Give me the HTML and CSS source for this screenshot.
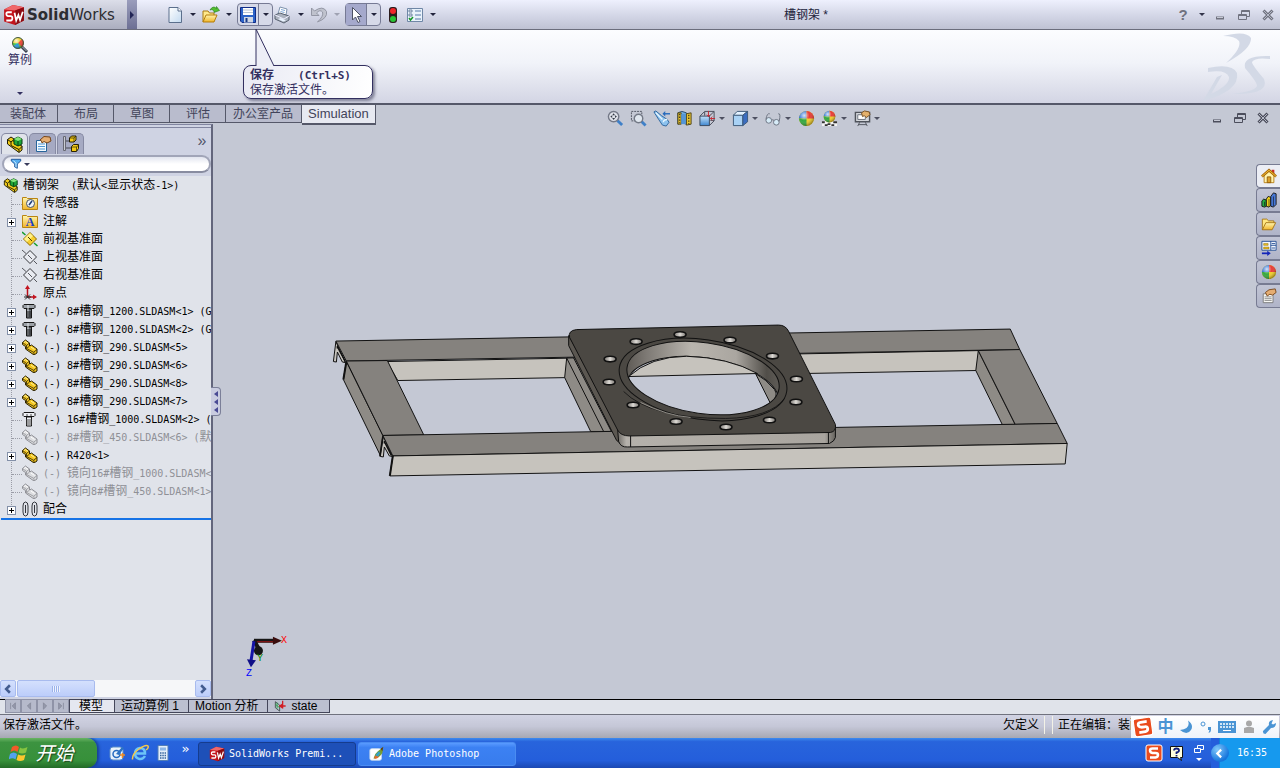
FILE: index.html
```html
<!DOCTYPE html>
<html lang="zh-CN">
  <head>
    <meta charset="UTF-8" />
    <meta name="viewport" content="width=device-width, initial-scale=1.0" />
    <title>槽钢架 *</title>
    <link rel="stylesheet" href="styles.css">
  </head>
  <body>
    <!-- icon sprite -->
    <svg class="sprite" aria-hidden="true">
      <defs>
        <linearGradient id="paper" x1="0" y1="0" x2="1" y2="1"><stop offset="0" stop-color="#fff" /><stop offset="1" stop-color="#c3daf0" /></linearGradient>
        <linearGradient id="glass" x1="0" y1="0" x2="0" y2="1"><stop offset="0" stop-color="#c4e3fb" /><stop offset="1" stop-color="#3e86cf" /></linearGradient>
        <linearGradient id="gold" x1="0" y1="0" x2="0" y2="1"><stop offset="0" stop-color="#fff6b0" /><stop offset="1" stop-color="#f0b429" /></linearGradient>
        <radialGradient id="shine" cx=".35" cy=".3" r=".7"><stop offset="0" stop-color="#fff" stop-opacity=".8" /><stop offset=".5" stop-color="#fff" stop-opacity="0" /><stop offset="1" stop-color="#000" stop-opacity=".35" /></radialGradient>
      </defs>
      <symbol id="i-sw" viewBox="0 0 20 20">
        <path d="M1 5l8-4 10 2v12l-8 4-10-3z" fill="#c3141c" />
        <path d="M1 5l8-4 10 2-8 3z" fill="#f0686a" />
        <path d="M11 6l8-3v12l-8 4z" fill="#8d0b12" />
        <path d="M8 7.500H4.500Q3 7.500 3 9t1.500 2H7q1.500 0 1.500 2T7 15H3M10.500 8l1.500 7 2-5 1.500 4.500L18 7" fill="none" stroke="#fff" stroke-width="1.600" />
      </symbol>
      <symbol id="i-new" viewBox="0 0 20 20">
        <path d="M4 2.500h9l3.500 3.500v11.500H4z" fill="url(#paper)" stroke="#5b6f8c" /><path d="M13 2.500V6h3.500" fill="#fff" stroke="#5b6f8c" />
      </symbol>
      <symbol id="i-open" viewBox="0 0 20 20">
        <path d="M2 17V6h5l1.500 2H13v3" fill="#ffe98c" stroke="#a97a10" /><path d="M2 17l3-7h11l-3 7z" fill="url(#gold)" stroke="#b47d0b" />
        <path d="M9 5q3-5 6.500-1.500V1.500l3 4-5.500 2V6Q11 3.500 9 5z" fill="#53bf30" stroke="#237a15" stroke-width=".6" />
      </symbol>
      <symbol id="i-save" viewBox="0 0 20 20">
        <path d="M2.500 2.500h15v15H4l-1.500-1.500z" fill="#2c63c8" stroke="#112c86" /><path d="M5 3h10v7H5z" fill="#fff" /><path d="M5 5h10M5 7.500h10" stroke="#b9c4d4" /><path d="M6 12h9v5.500H6z" fill="#cfd6e3" /><path d="M7.500 13h2v4h-2z" fill="#173987" />
      </symbol>
      <symbol id="i-print" viewBox="0 0 20 20">
        <path d="M5 9l2-7 7 2-1 6z" fill="#fff" stroke="#7d92ad" /><path d="M2 10l5-2 9 3v4l-5 3-9-4z" fill="#aab1bd" stroke="#596271" /><path d="M2 10l9 4 5-3" fill="none" stroke="#eef" /><path d="M5 14l5 2.500 3-1-5-2.500z" fill="#e9f3ff" /><path d="M8 4.500l4 1M7.500 6.500l4 1" stroke="#7ca5d6" />
      </symbol>
      <symbol id="i-undo" viewBox="0 0 20 20">
        <path d="M2.500 3v7.500h7.500L7.500 8Q11 4 13.500 7q1.500 4-5 10Q19 13 17.500 6.500 14 0 5.500 6z" fill="#bfc2cd" stroke="#9497a5" />
      </symbol>
      <symbol id="i-cursor" viewBox="0 0 20 20">
        <path d="M6.500 2.500v12.500l3-3 2.500 5.500 2-1-2.500-5h4z" fill="#fff" stroke="#4d5264" />
      </symbol>
      <symbol id="i-light" viewBox="0 0 20 20">
        <rect x="6" y="2" width="8" height="16" rx="3" fill="#2b1c1c" /><circle cx="10" cy="6" r="3" fill="#f0252a" /><circle cx="10" cy="14" r="3" fill="#28c334" />
      </symbol>
      <symbol id="i-list" viewBox="0 0 20 20">
        <path d="M2.500 3.500h15v13h-15z" fill="#e9f2fb" stroke="#6f87a6" /><path d="M10 6h6M10 10h6M10 14h6" stroke="#577aa8" /><path d="M4 5h3v2H4zM4 9h3v2H4z" fill="none" stroke="#6e83a0" /><path d="M4 13l1.500 2L8 12" fill="none" stroke="#159527" stroke-width="1.500" />
      </symbol>
      <symbol id="i-min" viewBox="0 0 16 16"><path d="M4 11h8" stroke="currentColor" stroke-width="3" /><path d="M5 10.500h6" stroke="#c6c9d4" /></symbol>
      <symbol id="i-restore" viewBox="0 0 16 16"><path d="M5.500 7V3.500h8v6H11M2.500 7.500h8v5h-8zM2.500 8.500h8M5.500 4.500h8" fill="none" stroke="currentColor" /></symbol>
      <symbol id="i-close" viewBox="0 0 16 16"><path d="M3.500 3.500l9 9m0-9l-9 9" stroke="currentColor" stroke-width="3" /><path d="M4 4l8 8m0-8l-8 8" stroke="#b4b8c6" /></symbol>
      <symbol id="i-study" viewBox="0 0 18 18">
        <path d="M10.500 10.500l5.500 5.500" stroke="#39424f" stroke-width="3" /><path d="M11 10.500l4.500 4.500" stroke="#aeb7c4" /><circle cx="7" cy="7" r="5.500" fill="#58c841" /><path d="M2 7a5 5 0 0 1 10 0z" fill="#f3cf31" /><path d="M7 7l4-4a5.500 5.500 0 0 1 0 8z" fill="#ef4535" /><path d="M7 7l-5 3q2 4 7 2z" fill="#2c9bdb" /><circle cx="7" cy="7" r="5.500" fill="url(#shine)" stroke="#4c5a3c" />
      </symbol>

      <symbol id="i-asm" viewBox="0 0 18 18">
        <path d="M1.500 4.500L5 2l3 2v3l8 4v4l-3 2.500L1.500 9z" fill="#f2cc19" stroke="#1d1a04" /><path d="M1.500 4.500L5 7v3.500l8 4V17M5 7l3-2.500M13 14.500l3-3" fill="none" stroke="#1d1a04" /><path d="M8 4l4-2 4 2v5l-4 2-4-2z" fill="#20a638" stroke="#063f10" /><path d="M8 4l4 2 4-2-4-2z" fill="#86e47c" /><path d="M12 6v5" stroke="#063f10" />
      </symbol>
      <symbol id="i-prop" viewBox="0 0 18 18">
        <path d="M2.500 5.500h10v11h-10z" fill="#f3faff" stroke="#27649b" /><path d="M4 9h7M4 11.500h7M4 14h7" stroke="#4b93d3" /><path d="M6 5l4-3.500 6 .5 1 4-4 2-3-1.500-2 1.500-.5-2z" fill="#e5ad72" stroke="#764519" />
      </symbol>
      <symbol id="i-config" viewBox="0 0 18 18">
        <path d="M3 6h5M3 13h6" stroke="#45464e" /><path d="M1.500 1.500h2v14h-2z" fill="#c9cbd3" stroke="#676873" /><path d="M7.500 3l2-2h4.500v4l-2 2H7.500z" fill="#f4ca14" stroke="#292307" /><path d="M9.500 11.500l2-2h5v4l-2 3h-5z" fill="#f4ca14" stroke="#292307" /><path d="M7.500 3H12v4M9.500 12h5v4M12 3l2-2M14.500 12l2-2" fill="none" stroke="#292307" stroke-width=".7" />
      </symbol>
      <symbol id="i-funnel" viewBox="0 0 14 14"><path d="M1.500 1.500h11v2L8.500 7v5l-3-1.500V7l-4-3.500z" fill="#55aef0" stroke="#12478d" /><path d="M4 3l3 3v5" stroke="#dcf2ff" fill="none" /></symbol>
      <symbol id="i-sensor" viewBox="0 0 16 16">
        <path d="M.5 14.500v-12h4l1 1h10v11z" fill="url(#gold)" stroke="#b98512" /><circle cx="8.500" cy="8.500" r="4" fill="#eef4fb" stroke="#48525f" /><path d="M7 10l3-4" stroke="#1f3f7a" stroke-width="1.500" />
      </symbol>
      <symbol id="i-note" viewBox="0 0 16 16"><path d="M.5 14.500v-12h4l1 1h10v11z" fill="url(#gold)" stroke="#b98512" /><text x="8" y="13" text-anchor="middle" class="note-letter">A</text></symbol>
      <symbol id="i-plane" viewBox="0 0 16 16"><path d="M8 1.500l6.500 6.500L8 14.500 1.500 8z" fill="#e9ebf1" stroke="#35363b" /><path d="M0 1l4 3.500M12 12l3 3M6 6l4 4" stroke="#55565c" /></symbol>
      <symbol id="i-plane-on" viewBox="0 0 16 16"><path d="M8 1.500l6.500 6.500L8 14.500 1.500 8z" fill="#f7ce2d" stroke="#8c6900" /><path d="M8 2l3 3-6 6-3-3z" fill="#fff18a" /><path d="M0 1l3.500 3M12 12l3.500 3" stroke="#119c2c" stroke-width="1.500" /><path d="M6 6l4 4" stroke="#4a3a00" /></symbol>
      <symbol id="i-origin" viewBox="0 0 16 16"><path d="M5.500 2v10h8" fill="none" stroke="#b80d18" stroke-width="1.500" /><path d="M5.500 0l2.500 4H3zM15 12l-4-2.500v5z" fill="#c41520" /><path d="M3 9.500l5 5m0-5l-5 5M2 12h7" stroke="#2b2b2b" /></symbol>
      <symbol id="i-bolt" viewBox="0 0 16 16"><path d="M2 1.500h10l1 1v2l-1 1H2l-1-1v-2z" fill="#9da2a8" stroke="#161616" /><path d="M4.500 6h5v9h-5z" fill="#6f757d" stroke="#161616" /><path d="M6 2v12" stroke="#e8edf2" /><path d="M4 9h6M4 11h6M4 13h6" stroke="#161616" /></symbol>
      <symbol id="i-bolt-off" viewBox="0 0 16 16"><path d="M2 1.500h10l1 1v2l-1 1H2l-1-1v-2z" fill="#eef0f4" stroke="#161616" /><path d="M4.500 6h5v9h-5z" fill="#eef0f4" stroke="#161616" /><path d="M5 3v2M9 3v2M4 9h6M4 11h6M4 13h6" stroke="#4d4d4d" /></symbol>
      <symbol id="i-part" viewBox="0 0 16 16"><path d="M.5 3.500l3-2.500 4 3v3l2-1 5.500 4v4l-3 2L3.500 10V7.500L.5 5.500z" fill="var(--part)" stroke="var(--part-edge)" /><path d="M.5 3.500l4 3v3l7.500 4V16M4.500 6.500l3-2.500M12 13l3-2.500M4.500 9.500L7 7.500" fill="none" stroke="var(--part-edge)" stroke-width=".8" /><path d="M2 3.500L3.500 2.500 6 4.500M9 8l3.500 2.500" stroke="var(--part-light)" fill="none" /></symbol>
      <symbol id="i-mates" viewBox="0 0 16 16"><path d="M1 5q0-4 2.500-4T6 5v6q0 4-2.500 4T1 11zM3.500 4v8M10 5q0-4 2.500-4T15 5v6q0 4-2.500 4T10 11zM12.500 4v8" fill="none" stroke="#33363d" /></symbol>

      <symbol id="i-fit" viewBox="0 0 18 18"><path d="M11 11l5 5" stroke="#3f80c8" stroke-width="3" /><circle cx="7" cy="7" r="5.500" fill="#dfe2ea" stroke="#747987" stroke-width="1.500" /><path d="M7 3.500L5.500 5.500h3zM7 10.500L5.500 8.500h3zM3.500 7l2-1.500v3zM10.500 7l-2-1.500v3z" fill="#333944" /></symbol>
      <symbol id="i-zoom" viewBox="0 0 18 18"><path d="M12 12l4.500 4.500" stroke="#3f80c8" stroke-width="3" /><path d="M1.500 1.500h11v10h-11z" fill="none" stroke="#4f5461" stroke-dasharray="2 1" /><circle cx="9" cy="9" r="4.500" fill="#dfe6ee" stroke="#737986" stroke-width="1.500" /></symbol>
      <symbol id="i-prev" viewBox="0 0 18 18"><path d="M1 2l2-1 6 5 6 4 2 3-3 4-4-1-4-6z" fill="#8cc2ee" stroke="#2e659d" /><path d="M3 3l7 7m1 3q0-3 4-3" fill="none" stroke="#e7f6ff" stroke-width="1.500" /><path d="M18 4h-6" stroke="#276bbd" stroke-width="1.500" /><path d="M10 4l3-3v6z" fill="#276bbd" /></symbol>
      <symbol id="i-section" viewBox="0 0 18 18"><path d="M2 3q4-3 9 0v12q-5-3-9 0z" fill="#73b1e5" stroke="#28486c" /><path d="M2 3h3.500v12H2zM11 4l5-1v12l-5 1z" fill="#e9c531" stroke="#4c431a" /><path d="M5.500 4h5v11h-5z" fill="#5596d6" /><path d="M3.800 4v10M13.500 5v10" stroke="#4c431a" stroke-width="1.500" stroke-dasharray="1.500 1.500" /></symbol>
      <symbol id="i-orient" viewBox="0 0 18 18"><path d="M1 6.500h10v10H1z" fill="url(#glass)" stroke="#36475e" /><path d="M1 6.500l5-5h10v10l-5 5M11 6.500l5-5M6 2v4M12 11h4" fill="none" stroke="#474d59" /><path d="M10 1v6m-2-2l2 2 2-2M17 9h-5m2-2l-2 2 2 2" stroke="#c22631" fill="none" /></symbol>
      <symbol id="i-style" viewBox="0 0 18 18"><path d="M1.500 5.500h10v11h-10z" fill="#a9d2f5" stroke="#3a5878" /><path d="M1.500 5.500l4-4h11l-5 4z" fill="#e3f2ff" stroke="#3a5878" /><path d="M11.500 5.500l5-4v11l-5 4z" fill="#3b6dc0" stroke="#3a5878" /></symbol>
      <symbol id="i-glasses" viewBox="0 0 18 18"><g fill="#d6ebf7" stroke="#6b7381"><circle cx="4" cy="11" r="3" /><circle cx="12" cy="13" r="3" /><path d="M1 10Q2 3 5 4M7 11q1-1.500 2.500 0M15 12q2-9-1-8" fill="none" /></g></symbol>
      <symbol id="i-ball" viewBox="0 0 18 18"><circle cx="9" cy="9" r="8" fill="#f1ce2b" /><path d="M9 9V1A8 8 0 0 0 1 9z" fill="#3576d7" /><path d="M9 9V1A8 8 0 0 1 17 9z" fill="#e73b35" /><path d="M9 9H1A8 8 0 0 0 9 17z" fill="#35a83e" /><circle cx="9" cy="9" r="8" fill="url(#shine)" /></symbol>
      <symbol id="i-scene" viewBox="0 0 18 18"><path d="M1 12h16v5H1z" fill="#f4f4f4" /><path d="M1 12h3v2H1zM7 14h3v2H7zM13 12h4v2h-4zM4 15h3v2H4zM11 15h3v2h-3z" fill="#333" /><use href="#i-ball" x="2" width="14" height="14" /></symbol>
      <symbol id="i-view" viewBox="0 0 18 18"><path d="M1.500 2.500h15v10h-15z" fill="#d3d6db" stroke="#4f535b" stroke-width="1.500" /><path d="M4 5h8v5H4z" fill="#fff" stroke="#69707b" /><path d="M6 13l-2 4m8-4l2 4M5 15.500h8" stroke="#4f535b" /><path d="M8 3l3-2 5 1 1 3-4 3-2-2-2 1z" fill="#e3b06c" stroke="#795122" /></symbol>

      <symbol id="i-home" viewBox="0 0 18 18"><path d="M12 2h3v7h-3z" fill="#c92a27" /><path d="M3.500 8v8.500h11V8L9 3z" fill="#fff3ae" stroke="#b57b13" /><path d="M1 9.500l8-7 8 7" fill="none" stroke="#a86a0d" stroke-width="3" /><path d="M1 9.500l8-7 8 7" fill="none" stroke="#f9c433" /><path d="M7 10h4v6.500H7z" fill="#dfa12a" stroke="#8d5b08" /></symbol>
      <symbol id="i-books" viewBox="0 0 18 18"><path d="M1 10l2-2 3 1v7l-2 1-3-1z" fill="#23ad42" stroke="#111" /><path d="M6 8l2-3 3 1v9l-2 2-3-1z" fill="#f1d51c" stroke="#111" /><path d="M11 5l3-4 3 1v12l-3 3-3-1z" fill="#4778d7" stroke="#111" /><path d="M4 11v5M9 8v8M14 5v11" stroke="#111" stroke-width=".7" /></symbol>
      <symbol id="i-folder" viewBox="0 0 18 18"><path d="M1.500 15.500v-12h5l2 2h6v3" fill="#ffe781" stroke="#a37112" /><path d="M1.500 15.500l4-8h11l-4 8z" fill="url(#gold)" stroke="#a37112" /></symbol>
      <symbol id="i-palette" viewBox="0 0 18 18"><path d="M1 1.500h16v10H1z" fill="#f2f6fd" stroke="#214c93" /><path d="M3 4h5v2H3zM3 8h6v2H3z" fill="#edc126" stroke="#927110" stroke-width=".6" /><path d="M11 1.500v10M11 6h6M12 4h4M12 9h4" stroke="#214c93" /><path d="M1 15h7" stroke="#1325b9" stroke-width="2" /><path d="M7 12l4 3-4 3z" fill="#1325b9" /></symbol>
      <symbol id="i-custom" viewBox="0 0 18 18"><path d="M2.500 6.500h11v10h-11z" fill="#f7f7f4" stroke="#777" /><path d="M4 10h8M4 12h8M4 14h8" stroke="#888" /><path d="M5 5l4-3 7-1 1 4-4 3-3-1-3 2z" fill="#e5ad72" stroke="#764519" /></symbol>

      <symbol id="i-sogou" viewBox="0 0 18 18"><rect x="1" y="1" width="16" height="16" rx="2" fill="#ea4b1d" stroke="#fff" /><path d="M13 4.500H7.500Q5 4.500 5 6.500T7.500 9h3q2.500 0 2.500 2t-2.500 2.500H5" fill="none" stroke="#fff" stroke-width="2.500" /></symbol>
      <symbol id="i-moon" viewBox="0 0 16 16"><path d="M10 1.500q3 8-8 9.500 7 6 11 0 3-5-3-9.500z" fill="#4a94d4" /></symbol>
      <symbol id="i-punct" viewBox="0 0 16 16"><circle cx="5" cy="5" r="2" fill="none" stroke="#4a94d4" /><path d="M10 8h3v3q0 2.500-2.500 3l1-3H10z" fill="#4a94d4" /></symbol>
      <symbol id="i-keys" viewBox="0 0 18 16"><path d="M0 2h18v12H0z" fill="#4a94d4" /><path d="M2 5h14M2 8h14" stroke="#fff" stroke-width="1.500" stroke-dasharray="2 1" /><path d="M5 11.500h8" stroke="#fff" /></symbol>
      <symbol id="i-person" viewBox="0 0 16 16"><circle cx="8" cy="4.500" r="3" fill="#a8a8a8" /><path d="M3 14V9l3-1h4l3 1v5z" fill="#a8a8a8" /></symbol>
      <symbol id="i-wrench" viewBox="0 0 16 16"><path d="M2 12l6-6q-1-4 4-5l-1.500 3.500 1.500 1L15 4q0 5-5 5l-5.500 6q-3 0-2.500-3z" fill="#4a94d4" /></symbol>
      <symbol id="i-win" viewBox="0 0 20 20"><path d="M3 4q4-3 7 0L8.500 9q-3-3-7 0z" fill="#f25a29" /><path d="M11 4.500q3 2 7.500-.5L17 9.500q-4 2-7.500 0z" fill="#85c440" /><path d="M1 11q3.500-3 7 0l-1.500 5.500q-3-2.500-7 0z" fill="#53a2f0" /><path d="M9 11.500q4 2 7.500 0L15 17q-4 2-7.500 0z" fill="#fbc72e" /></symbol>
      <symbol id="i-desk" viewBox="0 0 18 18"><rect x="2" y="3" width="13" height="13" rx="3" fill="#e7f2fb" stroke="#5b8dc8" /><circle cx="8.500" cy="10" r="3.500" fill="none" stroke="#256bbf" stroke-width="1.500" /><path d="M8 10l6-7 2 1-5 7z" fill="#2a72c4" /><path d="M12 11h5M14.500 9v5" stroke="#ee8b24" stroke-width="1.500" /></symbol>
      <symbol id="i-ie" viewBox="0 0 18 18"><path d="M14 12q-2 3.500-5.500 3Q4 14 4 9.500T9 4q5 0 5 5.500H5" fill="none" stroke="#6cc5f7" stroke-width="2.500" /><path d="M1.500 15.500Q1 10 8 5t9-3q1 2-2 4" fill="none" stroke="#f6c84a" stroke-width="1.500" /></symbol>
      <symbol id="i-calc" viewBox="0 0 18 18"><path d="M4 1.500h10v15H4z" fill="#e4eefa" stroke="#527eb7" /><path d="M6 3.500h6v3H6z" fill="#8db6e7" /><path d="M6 9h6M6 11.500h6M6 14h6" stroke="#35659f" stroke-width="1.500" stroke-dasharray="1.500 .8" /></symbol>
      <symbol id="i-ps" viewBox="0 0 18 18"><rect x="1" y="3" width="13" height="13" rx="2" fill="#fff" stroke="#c6d8ed" /><path d="M5 14q1-5 5-8l6-5-1 7q-4 7-10 6z" fill="#779d2d" /><path d="M6 14q0-4 4-4l1 2q-2 3-5 2z" fill="#e5692b" /><path d="M7 10l4-4 2 2-3 4z" fill="#33a1c4" /><path d="M13 3l3-2-1 5z" fill="#5b3a18" /></symbol>
      <symbol id="i-help" viewBox="0 0 18 18"><path d="M2.500 2.500h12v11h-2l1 3-4-3h-7z" fill="#ffffdf" stroke="#111" /><path d="M6 6.500q0-2 2.500-2t2.500 2q0 1.500-2.500 2v1.500M8.500 11v1.500" fill="none" stroke="#111d7a" stroke-width="1.800" /></symbol>
      <symbol id="i-state" viewBox="0 0 14 14"><path d="M1 2l5 4v7L1 9z" fill="none" stroke="#3c4a47" /><path d="M1 5l5 4M3 3v7" stroke="#29a048" /><path d="M9.500 1v9M13 7H6" stroke="#d11f25" stroke-width="1.500" /><path d="M5 7l4-3v6z" fill="#d11f25" /></symbol>
    </svg>

    <header class="titlebar">
      <div class="brand">
        <svg class="brand-logo"><use href="#i-sw" /></svg>
        <span class="brand-name"><b>Solid</b>Works</span>
        <button class="brand-menu" aria-label="菜单"><span class="tri-right"></span></button>
      </div>
      <nav class="quick-tools">
        <div class="split"><button class="tool" aria-label="新建"><svg><use href="#i-new" /></svg></button><button class="drop" aria-label="新建选项"></button></div>
        <div class="split"><button class="tool" aria-label="打开"><svg><use href="#i-open" /></svg></button><button class="drop" aria-label="打开选项"></button></div>
        <div class="split framed">
          <button class="tool" aria-label="保存"><svg><use href="#i-save" /></svg></button><button class="drop" aria-label="保存选项"></button>
          <div class="tooltip" role="tooltip">
            <svg class="tooltip-arrow" viewBox="0 0 24 39"><path d="M1 38V1l18 37" /></svg>
            <b>保存<span class="shortcut">(Ctrl+S)</span></b>
            <p>保存激活文件。</p>
          </div>
        </div>
        <div class="split"><button class="tool" aria-label="打印"><svg><use href="#i-print" /></svg></button><button class="drop" aria-label="打印选项"></button></div>
        <div class="split disabled"><button class="tool" aria-label="撤消"><svg><use href="#i-undo" /></svg></button><button class="drop" aria-label="撤消选项"></button></div>
        <div class="split framed pressed"><button class="tool" aria-label="选择"><svg><use href="#i-cursor" /></svg></button><button class="drop" aria-label="选择选项"></button></div>
        <button class="tool wide" aria-label="重建模型"><svg><use href="#i-light" /></svg></button>
        <div class="split"><button class="tool" aria-label="选项"><svg><use href="#i-list" /></svg></button><button class="drop" aria-label="更多选项"></button></div>
      </nav>
      <h1 class="doc-title">槽钢架 *</h1>
      <div class="window-buttons">
        <button class="help" aria-label="帮助">?</button><button class="drop" aria-label="帮助选项"></button>
        <button aria-label="最小化"><svg><use href="#i-min" /></svg></button>
        <button aria-label="还原"><svg><use href="#i-restore" /></svg></button>
        <button aria-label="关闭"><svg><use href="#i-close" /></svg></button>
      </div>
    </header>

    <section class="ribbon">
      <button class="ribbon-item"><svg><use href="#i-study" /></svg><span>算例</span><i class="caret"></i></button>
      <svg class="ds-logo" viewBox="0 0 78 70" aria-hidden="true">
        <path d="M21 3Q44-3 49 5 50 16 24 30 40 15 37 8 33 3 21 3z" />
        <path d="M6 35Q30 30 35 40 38 58 1 68L15 44l5-2L9 61Q28 52 27 44 24 36 6 39z" />
        <path d="M68 26Q53 24 50 29 50 32 62 46 68 62 30 61 56 58 55 52 54 48 43 35 40 22 68 23z" />
      </svg>
    </section>

    <main class="workspace">
      <nav class="command-tabs">
        <button>装配体</button>
        <button>布局</button>
        <button>草图</button>
        <button>评估</button>
        <button>办公室产品</button>
        <button class="active">Simulation</button>
      </nav>

      <aside class="panel">
        <div class="panel-tabs">
          <button class="active" aria-label="设计树"><svg><use href="#i-asm" /></svg></button>
          <button aria-label="属性"><svg><use href="#i-prop" /></svg></button>
          <button aria-label="配置"><svg><use href="#i-config" /></svg></button>
          <button class="more" aria-label="更多">»</button>
        </div>
        <label class="filter">
          <svg><use href="#i-funnel" /></svg><i class="caret"></i>
          <input type="text" aria-label="过滤器">
        </label>
        <div class="tree">
          <div class="tree-root"><svg><use href="#i-asm" /></svg><span>槽钢架<code>&nbsp; (</code>默认<code>&lt;</code>显示状态<code>-1&gt;)</code></span></div>
          <ul>
            <li><span class="stub"></span><svg><use href="#i-sensor" /></svg><span>传感器</span></li>
            <li><button class="plus" aria-label="展开"></button><svg><use href="#i-note" /></svg><span>注解</span></li>
            <li><span class="stub"></span><svg><use href="#i-plane-on" /></svg><span>前视基准面</span></li>
            <li><span class="stub"></span><svg><use href="#i-plane" /></svg><span>上视基准面</span></li>
            <li><span class="stub"></span><svg><use href="#i-plane" /></svg><span>右视基准面</span></li>
            <li><span class="stub"></span><svg><use href="#i-origin" /></svg><span>原点</span></li>
            <li><button class="plus" aria-label="展开"></button><svg><use href="#i-bolt" /></svg><span><code>(-) 8#</code>槽钢<code>_1200.SLDASM&lt;1&gt; (G</code></span></li>
            <li><button class="plus" aria-label="展开"></button><svg><use href="#i-bolt" /></svg><span><code>(-) 8#</code>槽钢<code>_1200.SLDASM&lt;2&gt; (G</code></span></li>
            <li><button class="plus" aria-label="展开"></button><svg><use href="#i-part" /></svg><span><code>(-) 8#</code>槽钢<code>_290.SLDASM&lt;5&gt;</code></span></li>
            <li><button class="plus" aria-label="展开"></button><svg><use href="#i-part" /></svg><span><code>(-) 8#</code>槽钢<code>_290.SLDASM&lt;6&gt;</code></span></li>
            <li><button class="plus" aria-label="展开"></button><svg><use href="#i-part" /></svg><span><code>(-) 8#</code>槽钢<code>_290.SLDASM&lt;8&gt;</code></span></li>
            <li><button class="plus" aria-label="展开"></button><svg><use href="#i-part" /></svg><span><code>(-) 8#</code>槽钢<code>_290.SLDASM&lt;7&gt;</code></span></li>
            <li><span class="stub"></span><svg><use href="#i-bolt-off" /></svg><span><code>(-) 16#</code>槽钢<code>_1000.SLDASM&lt;2&gt; (</code></span></li>
            <li class="suppressed"><span class="stub"></span><svg><use href="#i-part" /></svg><span><code>(-) 8#</code>槽钢<code>_450.SLDASM&lt;6&gt; (</code>默</span></li>
            <li><button class="plus" aria-label="展开"></button><svg><use href="#i-part" /></svg><span><code>(-) R420&lt;1&gt;</code></span></li>
            <li class="suppressed"><span class="stub"></span><svg><use href="#i-part" /></svg><span><code>(-) </code>镜向<code>16#</code>槽钢<code>_1000.SLDASM&lt;</code></span></li>
            <li class="suppressed"><span class="stub"></span><svg><use href="#i-part" /></svg><span><code>(-) </code>镜向<code>8#</code>槽钢<code>_450.SLDASM&lt;1&gt;</code></span></li>
            <li><button class="plus" aria-label="展开"></button><svg><use href="#i-mates" /></svg><span>配合</span></li>
          </ul>
        </div>
        <div class="scrollbar">
          <button aria-label="向左"><svg viewBox="0 0 8 8"><path d="M5.500 1l-3 3 3 3" /></svg></button>
          <span class="thumb"></span>
          <button aria-label="向右"><svg viewBox="0 0 8 8"><path d="M2.500 1l3 3-3 3" /></svg></button>
        </div>
        <button class="splitter" aria-label="折叠面板"><i></i><i></i><i></i></button>
      </aside>

      <section class="viewport">
        <svg class="model" viewBox="212 104 1068 595" preserveAspectRatio="xMidYMid slice">
          <defs>
            <linearGradient id="wall"><stop offset="0" stop-color="#55514c" /><stop offset=".15" stop-color="#7d7974" /><stop offset=".42" stop-color="#b9b5ae" /><stop offset=".68" stop-color="#aaa6a0" /><stop offset=".86" stop-color="#514e49" /><stop offset="1" stop-color="#6b6863" /></linearGradient>
            <linearGradient id="hole"><stop offset="0" stop-color="#77736f" /><stop offset=".5" stop-color="#dedbd6" /><stop offset="1" stop-color="#77736f" /></linearGradient>
            <linearGradient id="edge"><stop offset="0" stop-color="#6c6964" /><stop offset=".04" stop-color="#b5b1ab" /><stop offset=".95" stop-color="#a9a59f" /><stop offset="1" stop-color="#65625d" /></linearGradient>
            <clipPath id="bore"><ellipse cx="702.500" cy="377.500" rx="76.800" ry="35.500" transform="rotate(8 702.5 377.5)" /></clipPath>
          </defs>
          <g stroke="#111" stroke-linejoin="round">
            <!-- rear beam -->
            <path class="light" d="M386 361L980 350 976 370 397 380z" />
            <path class="light" d="M335 341l-2.500 20 3 .500 1-10 5 10 3 .500z" />
            <path d="M336.500 348v-2l8 15" fill="none" stroke-width="1.500" />
            <path class="mid" d="M335 340.500L1010 328.500 1019.500 349 345.500 360.500z" />
            <!-- left cross member -->
            <path class="side" d="M345.500 361l-3 18L379.500 455l2.500-20z" />
            <path d="M345.500 361l-3 18" stroke-width="2" />
            <path class="mid" d="M345.500 360.500l41-.500L423 434.500l-41 .500z" />
            <!-- middle cross member -->
            <path class="side" d="M566 357.500L564 377 590 431 625 431 586 357z" />
            <path d="M566 357.500L603 431M573 357.500l38 74" fill="none" />
            <!-- right cross member -->
            <path class="side" d="M978 350l-2.500 20L1002 424h13z" />
            <path class="mid" d="M978 350l41.500-1L1057 423l-42 1z" />
            <!-- front beam -->
            <path class="light" d="M382.500 436l-3 20 3 .500 1-10 5 9 3 .500z" />
            <path d="M383.500 443v-2l7 14M382 436l-3 20" fill="none" stroke-width="1.500" />
            <path class="mid" d="M382 435L1057 423l10 20L392 455.500z" />
            <path class="light" d="M392 455.500L1067 443l-2 20.500-676 12z" />
            <path d="M392 455.500l-3 20" stroke-width="2" />
            <!-- plate -->
            <path fill="#5b5751" d="M568 335v10L616 440l7 5V434z" />
            <path fill="url(#edge)" d="M617 429l1 12q2 6 9 5.500L829 443q5-2 6-6v-12z" />
            <path fill="#4b4843" d="M576 329L778 324.500q7 0 10 6L835 424q1 7-5 8L629 435.500q-9 0-12-6L569 337q-2-7 7-8z" />
            <path d="M630 435.500v11M828 432v11" fill="none" />
            <ellipse cx="702.500" cy="379" rx="84.600" ry="40" transform="rotate(8 702.5 379)" fill="#4b4843" />
            <path d="M623 391Q650 418 725 418 770 417 784 398" fill="none" stroke-width=".8" />
            <path d="M640 402Q666 415 690 417" fill="none" stroke="#aaa69f" stroke-width=".8" />
            <g clip-path="url(#bore)">
              <path d="M620 330h170v100H620z" fill="url(#wall)" />
              <ellipse cx="702.500" cy="393" rx="76.800" ry="36" transform="rotate(8 702.5 393)" fill="#c4c8d4" />
              <path class="light" d="M628 376Q650 356 686 355.700 728 357 757 373z" />
              <path class="side" d="M755 373l15 30q9-7 4-14-8-10-19-16z" />
            </g>
            <ellipse cx="702.500" cy="377.500" rx="76.800" ry="35.500" transform="rotate(8 702.5 377.5)" fill="none" />
            <g fill="url(#hole)" stroke-width="1.600">
              <ellipse cx="635.500" cy="341" rx="6" ry="2.800" /><ellipse cx="679.500" cy="334" rx="6" ry="2.800" />
              <ellipse cx="729.500" cy="339.500" rx="6" ry="2.800" /><ellipse cx="772" cy="355.500" rx="6" ry="2.800" />
              <ellipse cx="796" cy="378.500" rx="6" ry="2.800" /><ellipse cx="795.500" cy="401.500" rx="6" ry="2.800" />
              <ellipse cx="769" cy="419.500" rx="6" ry="2.800" /><ellipse cx="725.500" cy="426.500" rx="6" ry="2.800" />
              <ellipse cx="675.500" cy="421" rx="6" ry="2.800" /><ellipse cx="632.500" cy="404.500" rx="6" ry="2.800" />
              <ellipse cx="608.500" cy="381.500" rx="6" ry="2.800" /><ellipse cx="609.500" cy="358.500" rx="6" ry="2.800" />
            </g>
          </g>
          <!-- axis triad -->
          <g>
            <path d="M253 640.500h20" stroke="#161616" stroke-width="4" /><path d="M255 641.500h18" stroke="#a31414" />
            <path d="M272 636.500l9 4-9 4z" fill="#3a0d0d" />
            <path d="M253 640l5 9" stroke="#161616" stroke-width="4" /><circle cx="257.500" cy="650.500" r="4.500" fill="#161616" />
            <path d="M253 641l-3 20" stroke="#1414a5" stroke-width="3" /><path d="M246 659l9 1-5 7z" fill="#101087" />
            <text class="axis" x="280" y="643" fill="#f00">X</text>
            <text class="axis" x="256" y="661" fill="#080">Y</text>
            <text class="axis" x="245" y="676" fill="#00f">Z</text>
          </g>
        </svg>
        <div class="viewport-head">
          <nav class="view-tools">
            <button aria-label="整屏显示全图"><svg><use href="#i-fit" /></svg></button>
            <button aria-label="局部放大"><svg><use href="#i-zoom" /></svg></button>
            <button aria-label="上一视图"><svg><use href="#i-prev" /></svg></button>
            <button aria-label="剖面视图"><svg><use href="#i-section" /></svg></button>
            <button class="has-drop" aria-label="视图定向"><svg><use href="#i-orient" /></svg><i class="caret"></i></button>
            <button class="has-drop" aria-label="显示样式"><svg><use href="#i-style" /></svg><i class="caret"></i></button>
            <button class="has-drop" aria-label="隐藏/显示项目"><svg><use href="#i-glasses" /></svg><i class="caret"></i></button>
            <button aria-label="编辑外观"><svg><use href="#i-ball" /></svg></button>
            <button class="has-drop" aria-label="应用布景"><svg><use href="#i-scene" /></svg><i class="caret"></i></button>
            <button class="has-drop" aria-label="视图设定"><svg><use href="#i-view" /></svg><i class="caret"></i></button>
          </nav>
          <div class="doc-buttons">
            <button aria-label="最小化文档"><svg><use href="#i-min" /></svg></button>
            <button aria-label="还原文档"><svg><use href="#i-restore" /></svg></button>
            <button aria-label="关闭文档"><svg><use href="#i-close" /></svg></button>
          </div>
        </div>
        <nav class="task-pane">
          <button class="active" aria-label="资源"><svg><use href="#i-home" /></svg></button>
          <button aria-label="设计库"><svg><use href="#i-books" /></svg></button>
          <button aria-label="文件探索器"><svg><use href="#i-folder" /></svg></button>
          <button aria-label="视图调色板"><svg><use href="#i-palette" /></svg></button>
          <button aria-label="外观"><svg><use href="#i-ball" /></svg></button>
          <button aria-label="自定义属性"><svg><use href="#i-custom" /></svg></button>
        </nav>
      </section>
    </main>

    <nav class="model-tabs">
      <div class="pager">
        <button aria-label="首页"><svg viewBox="0 0 10 10"><path d="M2 1v8M8 1L4 5l4 4z" /></svg></button>
        <button aria-label="上一页"><svg viewBox="0 0 10 10"><path d="M7 1L3 5l4 4z" /></svg></button>
        <button aria-label="下一页"><svg viewBox="0 0 10 10"><path d="M3 1l4 4-4 4z" /></svg></button>
        <button aria-label="末页"><svg viewBox="0 0 10 10"><path d="M8 1v8M2 1l4 4-4 4z" /></svg></button>
      </div>
      <button class="active">模型</button>
      <button>运动算例 1</button>
      <button>Motion 分析</button>
      <button><svg><use href="#i-state" /></svg>state</button>
    </nav>

    <footer class="statusbar">
      <span class="status-text">保存激活文件。</span>
      <span class="state">欠定义</span>
      <span class="editing">正在编辑：装配体</span>
      <div class="ime">
        <svg class="ime-logo"><use href="#i-sogou" /></svg>
        <button class="ime-lang">中</button>
        <button aria-label="半角"><svg><use href="#i-moon" /></svg></button>
        <button aria-label="标点"><svg><use href="#i-punct" /></svg></button>
        <button aria-label="软键盘"><svg class="keys"><use href="#i-keys" /></svg></button>
        <button aria-label="账户"><svg><use href="#i-person" /></svg></button>
        <button aria-label="设置"><svg><use href="#i-wrench" /></svg></button>
      </div>
    </footer>

    <div class="taskbar">
      <button class="start"><svg><use href="#i-win" /></svg>开始</button>
      <div class="quick-launch">
        <button aria-label="显示桌面"><svg><use href="#i-desk" /></svg></button>
        <button aria-label="浏览器"><svg><use href="#i-ie" /></svg></button>
        <button aria-label="计算器"><svg><use href="#i-calc" /></svg></button>
        <button class="overflow" aria-label="更多">»</button>
      </div>
      <button class="task current"><svg><use href="#i-sw" /></svg>SolidWorks Premi...</button>
      <button class="task"><svg><use href="#i-ps" /></svg>Adobe Photoshop</button>
      <div class="lang-bar">
        <svg><use href="#i-sogou" /></svg>
        <svg><use href="#i-help" /></svg>
        <span class="lang-options"><svg viewBox="0 0 10 8"><path d="M3.500 3V.5h6v4H7M.5 3.500h6v4h-6z" /></svg><i class="caret"></i></span>
      </div>
      <div class="tray">
        <button class="tray-toggle" aria-label="显示隐藏图标"><svg viewBox="0 0 10 10"><path d="M6.500 1.500L3 5l3.500 3.500" /></svg></button>
        <time>16:35</time>
      </div>
    </div>
  </body>
</html>
```

FILE: styles.css
```css
:root {
  --line: #555869;
  --canvas: #c4c8d4;
  --pane: #e0e3ea;
  --ink: #333060;
  --part: #f2c51d;
  --part-edge: #2b2205;
  --part-light: #fff3a0;
}

* {
  box-sizing: border-box;
}

body {
  margin: 0;
  height: 100vh;
  display: flex;
  flex-direction: column;
  overflow: hidden;
  font-family: "Liberation Sans", "Noto Sans CJK SC", sans-serif;
  font-size: 12px;
  line-height: 18px;
  color: #000;
  background: var(--canvas);
}

button {
  display: flex;
  align-items: center;
  justify-content: center;
  margin: 0;
  padding: 0;
  border: 0;
  background: none;
  font: inherit;
  color: inherit;
  white-space: nowrap;
}

svg {
  display: block;
  flex: none;
  width: 16px;
  height: 16px;
}

code {
  font-family: "DejaVu Sans Mono", "Noto Sans CJK SC", monospace;
  font-size: 10px;
}

.sprite {
  position: absolute;
  width: 0;
  height: 0;
}

.note-letter {
  font: bold 12px "Liberation Serif", serif;
  fill: #1c3fc4;
}

.caret,
.drop::after {
  content: "";
  border: 3px solid transparent;
  border-top-color: currentColor;
  border-bottom: 0;
}

/* title bar */
.titlebar {
  flex: none;
  display: flex;
  align-items: center;
  height: 30px;
  border-bottom: 1px solid #6b6d7c;
  background: linear-gradient(#eef0fd, #d5d8e8 50%, #bfc2d3);
  color: #22243c;
}

.brand {
  display: flex;
  align-items: center;
  align-self: stretch;
  width: 137px;
  padding-left: 3px;
  background: linear-gradient(#dcdee9, #c3c5d3 50%, #abaebf);
}

.brand-logo {
  width: 22px;
  height: 22px;
}

.brand-name {
  flex: 1;
  padding-left: 2px;
  font-family: "DejaVu Sans", sans-serif;
  font-size: 15px;
  color: #2d2d31;
}

.brand-menu {
  align-self: stretch;
  width: 10px;
  background: linear-gradient(#9a9dbc, #6d7094);
}

.tri-right {
  border: 4px solid transparent;
  border-left-color: #222556;
  border-right: 0;
}

.quick-tools {
  display: flex;
  margin-left: 28px;
}

.split {
  position: relative;
  display: flex;
  width: 36px;
  height: 23px;
}

.tool {
  width: 20px;
}

.tool.wide {
  width: 24px;
}

.tool svg {
  width: 20px;
  height: 20px;
}

.drop {
  width: 16px;
}

.framed {
  border: 1px solid #767a94;
  border-radius: 4px;
  background: #d6d9e8;
}

.framed .drop {
  width: 14px;
  border-left: 1px solid #767a94;
}

.pressed .tool {
  background: #a5a9cc;
}

.disabled .drop {
  color: #9fa2b2;
}

.doc-title {
  flex: 1;
  margin: 0;
  text-align: center;
  font-size: 12px;
  font-weight: normal;
}

.window-buttons {
  display: flex;
  align-items: center;
  color: #70727f;
}

.window-buttons button {
  width: 24px;
}

.window-buttons .drop {
  width: 13px;
  color: #33354a;
}

.window-buttons .help {
  font-size: 15px;
  font-weight: bold;
}

.tooltip {
  position: absolute;
  z-index: 5;
  top: 61px;
  left: 5px;
  width: 130px;
  height: 34px;
  padding: 2px 6px;
  border: 1px solid var(--ink);
  border-radius: 8px;
  background: linear-gradient(100deg, #e9eaf4, #fff);
  box-shadow: 2px 2px 3px rgba(40, 40, 70, 0.5);
  color: var(--ink);
  line-height: 14px;
  white-space: nowrap;
}

.tooltip p {
  margin: 0;
}

.tooltip-arrow {
  position: absolute;
  top: -38px;
  left: 11px;
  width: 24px;
  height: 39px;
  fill: #edeef6;
  stroke: var(--ink);
}

.shortcut {
  margin-left: 24px;
  font-family: "DejaVu Sans Mono", monospace;
  font-size: 11px;
}

/* ribbon */
.ribbon {
  flex: none;
  display: flex;
  justify-content: space-between;
  height: 73px;
  padding: 6px 0 0 8px;
  background: linear-gradient(#fcfdff, #f1f3f9 45%, #d3d5e4);
}

.ribbon-item {
  flex-direction: column;
  align-self: stretch;
  justify-content: flex-start;
  color: var(--ink);
}

.ribbon-item svg {
  width: 18px;
  height: 18px;
}

.ribbon-item span {
  line-height: 12px;
}

.ribbon-item .caret {
  margin: auto 0 8px;
}

.ds-logo {
  width: 78px;
  height: 70px;
  margin-top: -3px;
  fill: #d3d9e6;
}

/* workspace */
.workspace {
  flex: 1;
  display: grid;
  grid-template: 19px 1fr / 213px 1fr;
  min-height: 0;
  border-top: 2px solid var(--line);
}

.command-tabs {
  grid-area: 1 / 1 / 2 / 3;
  justify-self: start;
  align-self: start;
  z-index: 2;
  display: flex;
  align-items: flex-start;
  color: #42445a;
}

.command-tabs button {
  height: 18px;
  padding: 0 15px 0 16px;
  border: solid var(--line);
  border-width: 0 1px 1px 0;
  background: #b9bccd;
  line-height: 16px;
}

.command-tabs button:first-child {
  padding: 0 11px 0 10px;
}

.command-tabs button:nth-child(5) {
  padding: 0 8px 0 7px;
}

.command-tabs .active {
  height: 20px;
  padding: 0 6px;
  border-width: 0 1px 2px 0;
  background: #e7e9f1;
  font-size: 13px;
}

.panel {
  position: relative;
  grid-area: 2 / 1;
  display: flex;
  flex-direction: column;
  min-height: 0;
  border-top: 1px solid #8185a0;
  border-right: 2px solid #63667c;
  background: #cfd3e3;
}

.panel-tabs {
  display: flex;
  gap: 1px;
  height: 28px;
  margin-top: 2px;
  padding: 5px 1px 0;
  border-top: 1px solid #8185a0;
}

.panel-tabs button {
  width: 27px;
  height: 21px;
  border: 1px solid #868aa3;
  border-bottom: 0;
  border-radius: 5px 5px 0 0;
  background: #a6aac3;
}

.panel-tabs svg {
  width: 18px;
  height: 18px;
}

.panel-tabs .active {
  background: var(--pane);
}

.panel-tabs .more {
  width: 16px;
  height: 16px;
  margin-left: auto;
  border: 0;
  background: none;
  font-size: 16px;
  color: #53566b;
}

.filter {
  display: flex;
  align-items: center;
  gap: 2px;
  height: 18px;
  margin: 0 0 3px 2px;
  padding-left: 6px;
  border: 2px solid #a1a5b8;
  border-bottom-color: #888ca0;
  border-radius: 9px;
  background: linear-gradient(#e2e5ef, #fff 50%);
  color: #3a3c5c;
}

.filter svg {
  width: 12px;
  height: 12px;
}

.filter input {
  flex: 1;
  min-width: 0;
  height: 12px;
  padding: 0;
  border: 0;
  outline: 0;
  background: none;
  font: inherit;
}

.tree {
  flex: 1;
  min-height: 0;
  overflow: hidden;
  background: var(--pane);
  white-space: nowrap;
}

.tree-root {
  display: flex;
  align-items: center;
  gap: 4px;
  height: 18px;
  padding-left: 3px;
}

.tree ul {
  position: relative;
  margin: 0 0 0 1px;
  padding: 0;
  border-bottom: 2px solid #1673e6;
  list-style: none;
}

.tree ul::before {
  content: "";
  position: absolute;
  top: 0;
  bottom: 9px;
  left: 10px;
  border-left: 1px dotted #9a9ca6;
}

.tree li {
  display: flex;
  align-items: center;
  height: 18px;
}

.tree li svg {
  margin-right: 5px;
}

.stub,
.plus {
  position: relative;
  flex: none;
  width: 9px;
  height: 9px;
  margin: 2px 6px 0;
}

.stub::before {
  content: "";
  position: absolute;
  top: 4px;
  left: 5px;
  width: 10px;
  border-top: 1px dotted #9a9ca6;
}

.plus {
  border: 1px solid #8390a8;
  background: linear-gradient(#000, #000) center / 5px 1px no-repeat,
    linear-gradient(#000, #000) center / 1px 5px no-repeat, #fff;
}

.suppressed {
  color: #8f9096;
  --part: #dcdde0;
  --part-edge: #8f9096;
  --part-light: #fff;
}

.scrollbar {
  flex: none;
  display: flex;
  height: 17px;
  margin-bottom: 2px;
  background: #f6f7f9;
}

.scrollbar button,
.thumb {
  width: 16px;
  border: 1px solid #a8bbee;
  border-radius: 2px;
  background: linear-gradient(#d4e0fd, #bccdfa);
}

.scrollbar svg {
  width: 10px;
  height: 10px;
  fill: none;
  stroke: #435c8f;
  stroke-width: 2;
}

.thumb {
  width: 78px;
  margin: 0 auto 0 1px;
  background: repeating-linear-gradient(90deg, #9cb3ea 0 1px, #eef3ff 1px 2px) center / 8px 6px no-repeat, linear-gradient(#d4e0fd, #bccdfa);
}

.splitter {
  position: absolute;
  z-index: 3;
  top: 262px;
  right: -10px;
  flex-direction: column;
  gap: 2px;
  width: 10px;
  height: 29px;
  border: 1px solid #7b7f98;
  border-left: 0;
  border-radius: 0 4px 4px 0;
  background: #c9cce0;
}

.splitter i {
  border: 3px solid transparent;
  border-right: 4px solid #494a94;
  border-left: 0;
}

.viewport {
  position: relative;
  grid-area: 1 / 2 / 3 / 3;
  min-height: 0;
  background: var(--canvas);
}

.model {
  position: absolute;
  inset: 0;
  width: 100%;
  height: 100%;
}

.light {
  fill: #c6c3bd;
}

.mid {
  fill: #85827e;
}

.side {
  fill: #8e8b86;
}

.axis {
  font: 10px "Liberation Mono", monospace;
}

.viewport-head {
  position: relative;
  display: grid;
  grid-template-columns: 1fr auto 1fr;
  align-items: center;
  padding: 2px 6px 0 0;
}

.view-tools {
  grid-column: 2;
  display: flex;
  color: #4d5061;
}

.view-tools button {
  width: 23px;
  height: 22px;
}

.view-tools .has-drop {
  width: 33px;
  gap: 3px;
}

.view-tools svg {
  width: 17px;
  height: 17px;
}

.doc-buttons {
  display: flex;
  justify-content: flex-end;
  color: #4c4e5c;
}

.doc-buttons button {
  width: 23px;
}

.task-pane {
  position: relative;
  display: flex;
  flex-direction: column;
  align-items: flex-end;
  margin-top: 35px;
}

.task-pane button {
  width: 24px;
  height: 24px;
  border: 1px solid #777b92;
  border-right: 0;
  border-radius: 4px 0 0 4px;
  background: linear-gradient(#c2c5d5, #b0b4c8);
}

.task-pane .active {
  background: #eceef5;
}

/* model / motion tabs */
.model-tabs {
  flex: none;
  display: flex;
  height: 15px;
  background: linear-gradient(#000, #000) top / 100% 1px no-repeat, var(--pane);
}

.model-tabs > button {
  gap: 4px;
  height: 14px;
  padding: 0 9px 0 6px;
  border: solid #44465a;
  border-width: 1px 1px 1px 0;
  background: #bcc0d0;
}

.model-tabs > .active {
  padding: 0 11px 0 9px;
  border-left-width: 1px;
  background: #e5e7f0;
}

.model-tabs > button:last-child {
  padding-right: 12px;
}

.model-tabs svg {
  width: 13px;
  height: 12px;
}

.pager {
  display: flex;
  padding-left: 5px;
}

.pager button {
  width: 16px;
  height: 14px;
  border: 1px solid #8f93a7;
  background: #b6bacb;
}

.pager svg {
  width: 10px;
  height: 8px;
  fill: #9599aa;
  stroke: #85899b;
}

/* status bar */
.statusbar {
  position: relative;
  flex: none;
  display: flex;
  align-items: center;
  height: 24px;
  padding: 0 149px 4px 3px;
  border-top: 1px solid #70727e;
  background: linear-gradient(#d1d3e3, #c5c7d7 50%, #a6a8b3);
}

.status-text {
  flex: 1;
}

.state {
  margin-right: 7px;
  padding-right: 5px;
  border-right: 1px solid #f3f2e7;
}

.editing {
  width: 79px;
  padding-left: 5px;
  overflow: hidden;
  border-left: 1px solid #f3f2e7;
  white-space: nowrap;
}

.ime {
  position: absolute;
  right: 1px;
  bottom: 0;
  display: flex;
  align-items: center;
  justify-content: space-around;
  width: 148px;
  height: 22px;
  background: linear-gradient(#fff, #eef3fa);
}

.ime-logo {
  width: 20px;
  height: 20px;
  transform: rotate(-8deg);
}

.ime .keys {
  width: 18px;
}

.ime-lang {
  font-size: 16px;
  font-weight: bold;
  color: #4a94d4;
}

/* taskbar */
.taskbar {
  flex: none;
  display: flex;
  align-items: center;
  height: 30px;
  background: linear-gradient(#3d8bee, #2864dc 12%, #245edb 75%, #1b48b2);
  color: #fff;
  font-family: "DejaVu Sans Mono", "Noto Sans CJK SC", monospace;
  font-size: 10px;
}

.start {
  gap: 6px;
  align-self: stretch;
  width: 97px;
  padding-right: 14px;
  border-radius: 0 10px 10px 0;
  background: linear-gradient(#69b464, #3c9340 15%, #37903a 75%, #236b27);
  box-shadow: 2px 0 3px #173f91;
  font-size: 19px;
  font-style: italic;
  text-shadow: 1px 1px 1px #1c451e;
}

.start svg {
  width: 20px;
  height: 20px;
}

.quick-launch {
  display: flex;
  width: 101px;
  padding-left: 8px;
}

.quick-launch button {
  width: 23px;
}

.quick-launch svg {
  width: 18px;
  height: 18px;
}

.quick-launch .overflow {
  align-items: flex-start;
  font-size: 13px;
  line-height: 10px;
}

.task {
  justify-content: flex-start;
  gap: 4px;
  width: 158px;
  height: 24px;
  margin: 1px 2px 0 0;
  padding-left: 10px;
  border: 1px solid #4a8cf2;
  border-radius: 3px;
  background: linear-gradient(#5a9bff, #3c81f3 20%, #387ced);
}

.current {
  border-color: #153c8e;
  background: #1e50b8;
}

.lang-bar {
  display: flex;
  align-items: center;
  gap: 5px;
  margin-left: auto;
  padding-right: 4px;
}

.lang-bar > svg {
  width: 18px;
  height: 18px;
}

.lang-options {
  display: flex;
  flex-direction: column;
  align-items: center;
  gap: 5px;
  width: 16px;
}

.lang-options svg {
  width: 10px;
  height: 8px;
  fill: none;
  stroke: #fff;
}

.tray {
  display: flex;
  align-items: center;
  align-self: stretch;
  gap: 8px;
  padding-right: 13px;
  background: linear-gradient(90deg, transparent 8px, #0d7fd8 8px, #0d7fd8 9px, transparent 9px), linear-gradient(90deg, #245edb 8px, #1699ee 8px);
}

.tray-toggle {
  width: 18px;
  height: 18px;
  border-radius: 50%;
  background: radial-gradient(circle at 35% 30%, #7fc8fb, #1675dc 70%);
}

.tray-toggle svg {
  width: 11px;
  height: 11px;
  fill: none;
  stroke: #fff;
  stroke-width: 2;
}
```
